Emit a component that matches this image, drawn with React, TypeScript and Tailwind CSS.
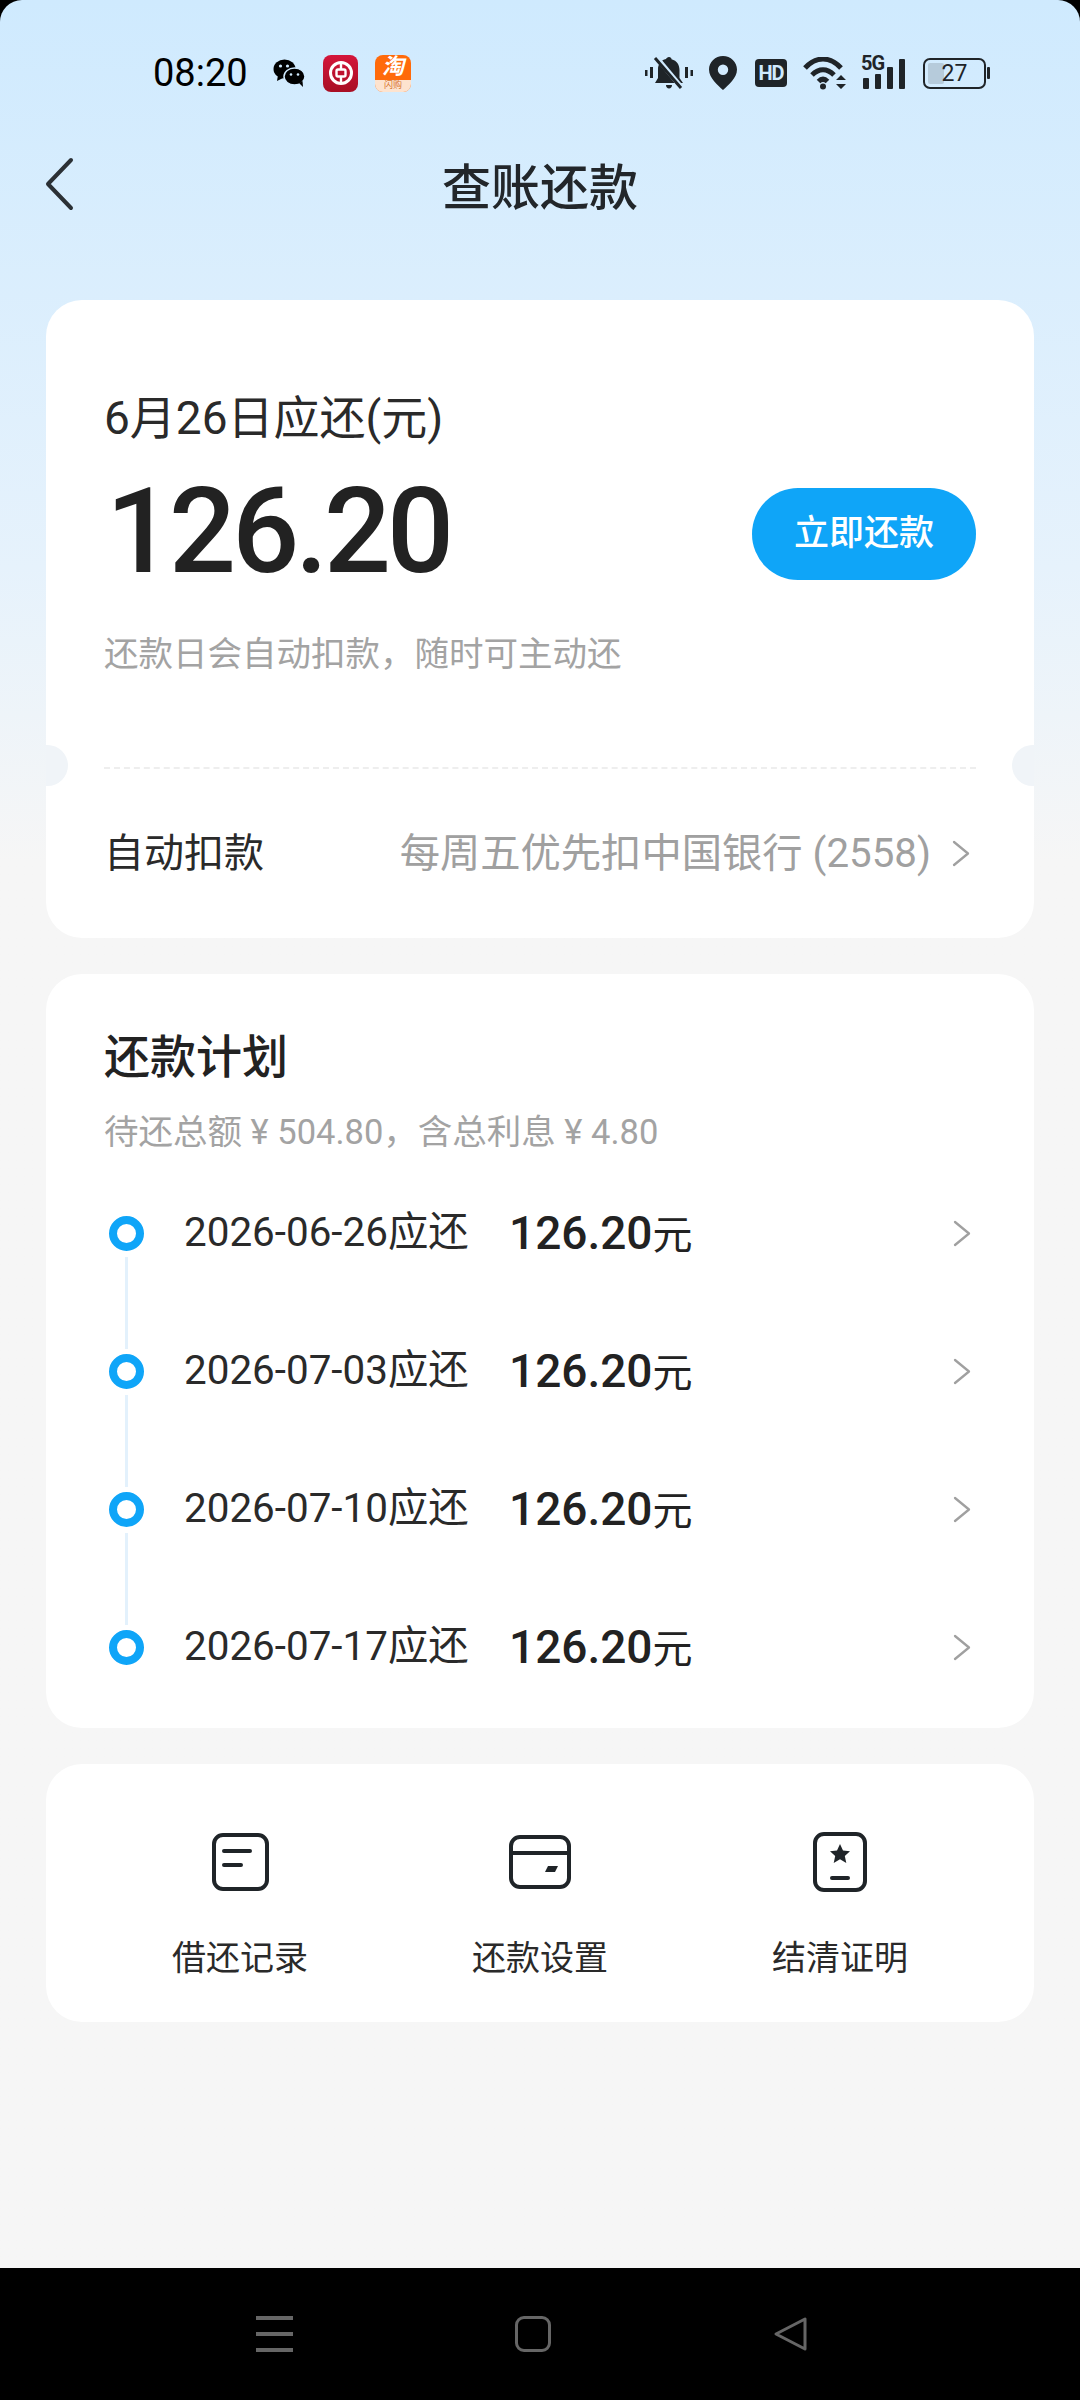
const font = { fontFamily: 'Roboto, "Noto Sans CJK SC", sans-serif' };

const plans = ['2026-06-26', '2026-07-03', '2026-07-10', '2026-07-17'];

function Chevron() {
  return (
    <svg width="20" height="27" viewBox="0 0 20 27" fill="none" stroke="#a0a0a0" strokeWidth="2.300" strokeLinecap="round" strokeLinejoin="round">
      <path d="M3 2l14 11.500L3 25" />
    </svg>
  );
}

function WeChatIcon() {
  return (
    <svg width="32" height="28" viewBox="0 0 32 28" fill="#000">
      <ellipse cx="11.500" cy="10" rx="11" ry="9.500" />
      <path d="M5 16l-1 6 6-3z" />
      <ellipse cx="21.500" cy="17.500" rx="10.500" ry="8.500" fill="#000" stroke="#d0eafe" strokeWidth="1.500" />
      <path d="M26 24l4 4-.5-6z" />
      <circle cx="7.500" cy="7" r="1.600" fill="#d0eafe" />
      <circle cx="14.500" cy="7" r="1.600" fill="#d0eafe" />
      <circle cx="18" cy="15.500" r="1.300" fill="#d0eafe" />
      <circle cx="25" cy="15.500" r="1.300" fill="#d0eafe" />
    </svg>
  );
}

function BankIcon() {
  return (
    <div className="w-[35px] h-[37px] rounded-[8px] bg-gradient-to-b from-[#d4153a] to-[#a80f24] flex items-center justify-center">
      <svg width="26" height="26" viewBox="0 0 26 26" fill="none" stroke="#fff">
        <circle cx="13" cy="13" r="10.500" strokeWidth="3" />
        <rect x="8.500" y="9.500" width="9" height="7" rx="1.500" strokeWidth="2.400" />
        <path d="M13 3v6M13 17v6" strokeWidth="2.400" />
      </svg>
    </div>
  );
}

function TaobaoIcon() {
  return (
    <div className="w-[36px] h-[37px] rounded-[8px] overflow-hidden flex flex-col items-center bg-[#ff6a0a]">
      <div className="h-[25px] flex items-center justify-center text-white text-[22px] font-bold italic leading-none">淘</div>
      <div className="flex-1 w-full bg-[#fde3cf] flex items-center justify-center text-[#d9752f] text-[9px] leading-none whitespace-nowrap">闪购</div>
    </div>
  );
}

function StatusIcons() {
  return (
    <div className="flex items-center">
      {/* muted bell */}
      <svg width="48" height="34" viewBox="0 0 48 34" fill="#1f2428">
        <rect x="0" y="14" width="2.500" height="6" />
        <rect x="5" y="11" width="3" height="11" />
        <rect x="40" y="11" width="3" height="11" />
        <rect x="45.500" y="14" width="2.500" height="6" />
        <path d="M24 1c1.500 0 2.500 1 2.500 2.200C32 4.500 34.500 9 34.500 14v8l3.500 5H10l3-5v-9c0-4.500 3-9 8-10C21.500 2 22.500 1 24 1z" />
        <path d="M21 29h6c0 2-1.300 3.500-3 3.500S21 31 21 29z" />
        <path d="M12 2l25 30" stroke="#d0eafe" strokeWidth="5" />
        <path d="M10 2l26 30" stroke="#1f2428" strokeWidth="3" />
      </svg>
      {/* location pin */}
      <svg className="ml-[16px]" width="28" height="34" viewBox="0 0 28 34" fill="#1f2428">
        <path fillRule="evenodd" d="M14 0c7.700 0 14 6 14 13.500C28 22 19 29.500 14 34 9 29.500 0 22 0 13.500 0 6 6.300 0 14 0zm0 8.500a5.200 5.200 0 1 0 0 10.400 5.200 5.200 0 0 0 0-10.400z" />
      </svg>
      {/* HD */}
      <div className="ml-[18px] w-[32px] h-[28px] rounded-[4px] bg-[#1f2428] text-[#d0eafe] text-[20px] font-bold leading-[28px] text-center tracking-[-1px]">HD</div>
      {/* wifi */}
      <svg className="ml-[16px]" width="44" height="33" viewBox="0 0 44 33" fill="none" stroke="#1f2428" strokeWidth="5">
        <path d="M2 11C13-1 27-1 38 11" />
        <path d="M9 18c7-7 15-7 22 0" />
        <path d="M15.500 24.500c3-3 6-3 9 0" />
        <circle cx="20" cy="29.500" r="3" fill="#1f2428" stroke="none" />
        <path d="M33 23l5-5 5 5zM33 27l5 5 5-5z" fill="#1f2428" stroke="none" />
      </svg>
      {/* 5G + signal */}
      <div className="ml-[14px] relative w-[46px] h-[32px] flex items-end gap-[6px]">
        <div className="ml-[2px] w-[6px] h-[11px] rounded-[1px] bg-[#1f2428]" />
        <div className="w-[6px] h-[15px] rounded-[1px] bg-[#1f2428]" />
        <div className="w-[6px] h-[22px] rounded-[1px] bg-[#1f2428]" />
        <div className="w-[6px] h-[30px] rounded-[1px] bg-[#1f2428]" />
        <span className="absolute left-0 top-[-4px] text-[#1f2428] text-[20px] font-bold leading-[20px] tracking-[-1px]">5G</span>
      </div>
      {/* battery */}
      <div className="ml-[16px] flex items-center">
        <div className="relative w-[63px] h-[31px] rounded-[7px] border-[2px] border-[#1f2428] overflow-hidden">
          <div className="absolute left-[3px] top-[3px] bottom-[3px] w-[16px] rounded-[2px] bg-[#b6cbdb]" />
          <span className="absolute inset-0 text-center text-[#1f2428] text-[23px] leading-[27px] font-normal">27</span>
        </div>
        <div className="ml-[1px] w-[3px] h-[12px] rounded-[1px] bg-[#1f2428]" />
      </div>
    </div>
  );
}

function RecordIcon() {
  return (
    <svg width="57" height="58" viewBox="0 0 57 58" fill="none" stroke="#1f2428" strokeWidth="4">
      <rect x="2" y="2" width="53" height="54" rx="9" />
      <path d="M12 18h26M12 32h17" strokeLinecap="round" />
    </svg>
  );
}

function CardIcon() {
  return (
    <svg width="62" height="54" viewBox="0 0 62 54" fill="none" stroke="#1f2428" strokeWidth="4">
      <rect x="2" y="2" width="58" height="50" rx="9" />
      <path d="M2 18h58" />
      <path d="M39 31h10l-3 6H36z" fill="#1f2428" stroke="none" />
    </svg>
  );
}

function ProofIcon() {
  return (
    <svg width="54" height="60" viewBox="0 0 54 60" fill="none" stroke="#1f2428" strokeWidth="4">
      <rect x="2" y="2" width="50" height="56" rx="9" />
      <path d="M27 12l3 6.500 7 .8-5.200 4.700 1.500 7L27 27.300 20.700 31l1.500-7-5.200-4.700 7-.8z" fill="#1f2428" stroke="none" />
      <path d="M19 46h16" strokeLinecap="round" />
    </svg>
  );
}

const quickLinks = [
  { label: '借还记录', icon: <RecordIcon /> },
  { label: '还款设置', icon: <CardIcon /> },
  { label: '结清证明', icon: <ProofIcon /> },
];

export default function App() {
  return (
    <div className="w-[1080px] h-[2400px] bg-black flex flex-col overflow-hidden" style={font}>
      <div className="flex-1 rounded-t-[22px] bg-gradient-to-b from-[#cfeafe] from-0% via-[#e6f2fc] via-[25%] to-[#f6f6f6] to-[38%] flex flex-col">
        {/* status bar */}
        <div className="h-[72px] mt-[37px] pl-[153px] pr-[90px] flex items-center justify-between">
          <div className="flex items-center">
            <span className="text-[38px] text-black leading-none w-[120px]">08:20</span>
            <WeChatIcon />
            <div className="ml-[18px]"><BankIcon /></div>
            <div className="ml-[17px]"><TaobaoIcon /></div>
          </div>
          <StatusIcons />
        </div>

        {/* header */}
        <div className="relative h-[80px] mt-[39px] flex items-center justify-center">
          <svg className="absolute left-[44px] top-[9px]" width="30" height="54" viewBox="0 0 30 54" fill="none" stroke="#2b3035" strokeWidth="4" strokeLinecap="round" strokeLinejoin="round">
            <path d="M27 3L4 27l23 24" />
          </svg>
          <h1 className="text-[49px] font-medium text-[#22262a] leading-none">查账还款</h1>
        </div>

        <div className="mt-[72px] px-[46px] flex flex-col gap-[36px]">
          {/* due card */}
          <div className="relative h-[638px] rounded-[36px] bg-white pt-[94px] px-[58px] flex flex-col overflow-hidden">
            <div className="text-[46px] leading-[48px] text-[#2a2a2a]">6月26日应还(元)</div>
            <div className="mt-[33px] flex items-center justify-between">
              <div className="text-[118px] leading-[114px] pb-[4px] font-medium tracking-[-4px] text-[#222] pl-[2px]">126.20</div>
              <button className="w-[224px] h-[92px] rounded-full bg-[#0fa5f8] text-white text-[35px] font-medium">立即还款</button>
            </div>
            <div className="mt-[41px] text-[34.5px] leading-[40px] text-[#a3a3a3]">还款日会自动扣款，随时可主动还</div>
            <div className="mt-[93px] border-t-2 border-dashed border-[#eeeeee]" />
            <div className="mt-[59px] flex items-center justify-between">
              <span className="text-[40px] leading-[52px] text-[#2a2a2a]">自动扣款</span>
              <span className="flex items-center text-[40.3px] leading-[52px] text-[#a0a0a0]">
                每周五优先扣中国银行 (2558)
                <span className="ml-[20px] mr-[5px] mt-[-2px]"><Chevron /></span>
              </span>
            </div>
            {/* ticket notches */}
            <div className="absolute left-[-22px] top-[445px] w-[44px] h-[41px] rounded-full bg-[#f0f4f8]" />
            <div className="absolute right-[-22px] top-[445px] w-[44px] h-[41px] rounded-full bg-[#f0f4f8]" />
          </div>

          {/* plan card */}
          <div className="h-[754px] rounded-[36px] bg-white pt-[58px] px-[58px] flex flex-col">
            <div className="text-[46px] leading-[50px] font-medium text-[#222]">还款计划</div>
            <div className="mt-[30px] text-[34.5px] leading-[40px] text-[#a3a3a3]">待还总额 ¥ 504.80，含总利息 ¥ 4.80</div>
            <div className="mt-[12px] flex flex-col">
              {plans.map((date, i) => (
                <div key={date} className="relative h-[138px] flex items-center">
                  <div className="w-[35px] h-[35px] ml-[5px] rounded-full border-[8px] border-[#0fa5f8] bg-white" />
                  {i < plans.length - 1 && (
                    <div className="absolute left-[21px] top-[93px] w-[3px] h-[92px] bg-[#e3f1fc]" />
                  )}
                  <span className="ml-[40px] w-[325px] text-[40.4px] text-[#2a2a2a] whitespace-nowrap">{date}应还</span>
                  <span className="text-[40px] text-[#222] whitespace-nowrap">
                    <span className="text-[46px] font-medium">126.20</span>元
                  </span>
                  <span className="ml-auto mr-[4px]"><Chevron /></span>
                </div>
              ))}
            </div>
          </div>

          {/* quick links */}
          <div className="h-[258px] rounded-[36px] bg-white grid grid-cols-3 px-[44px]">
            {quickLinks.map((link) => (
              <div key={link.label} className="flex flex-col items-center pt-[68px]">
                <div className="h-[60px] flex items-center">{link.icon}</div>
                <span className="mt-[46px] text-[34px] leading-[40px] text-[#2a2a2a]">{link.label}</span>
              </div>
            ))}
          </div>
        </div>
      </div>

      {/* android nav */}
      <div className="h-[132px] bg-black flex items-start justify-between pl-[256px] pr-[272px] pt-[48px]">
        <div className="w-[37px] h-[36px] flex flex-col justify-between">
          <div className="h-[4px] bg-[#666]" />
          <div className="h-[4px] bg-[#666]" />
          <div className="h-[4px] bg-[#666]" />
        </div>
        <div className="w-[36px] h-[36px] rounded-[9px] border-[3px] border-[#666]" />
        <svg width="35" height="36" viewBox="0 0 35 36" fill="none" stroke="#666" strokeWidth="3" strokeLinejoin="round">
          <path d="M32 3v30L3 18z" />
        </svg>
      </div>
    </div>
  );
}
